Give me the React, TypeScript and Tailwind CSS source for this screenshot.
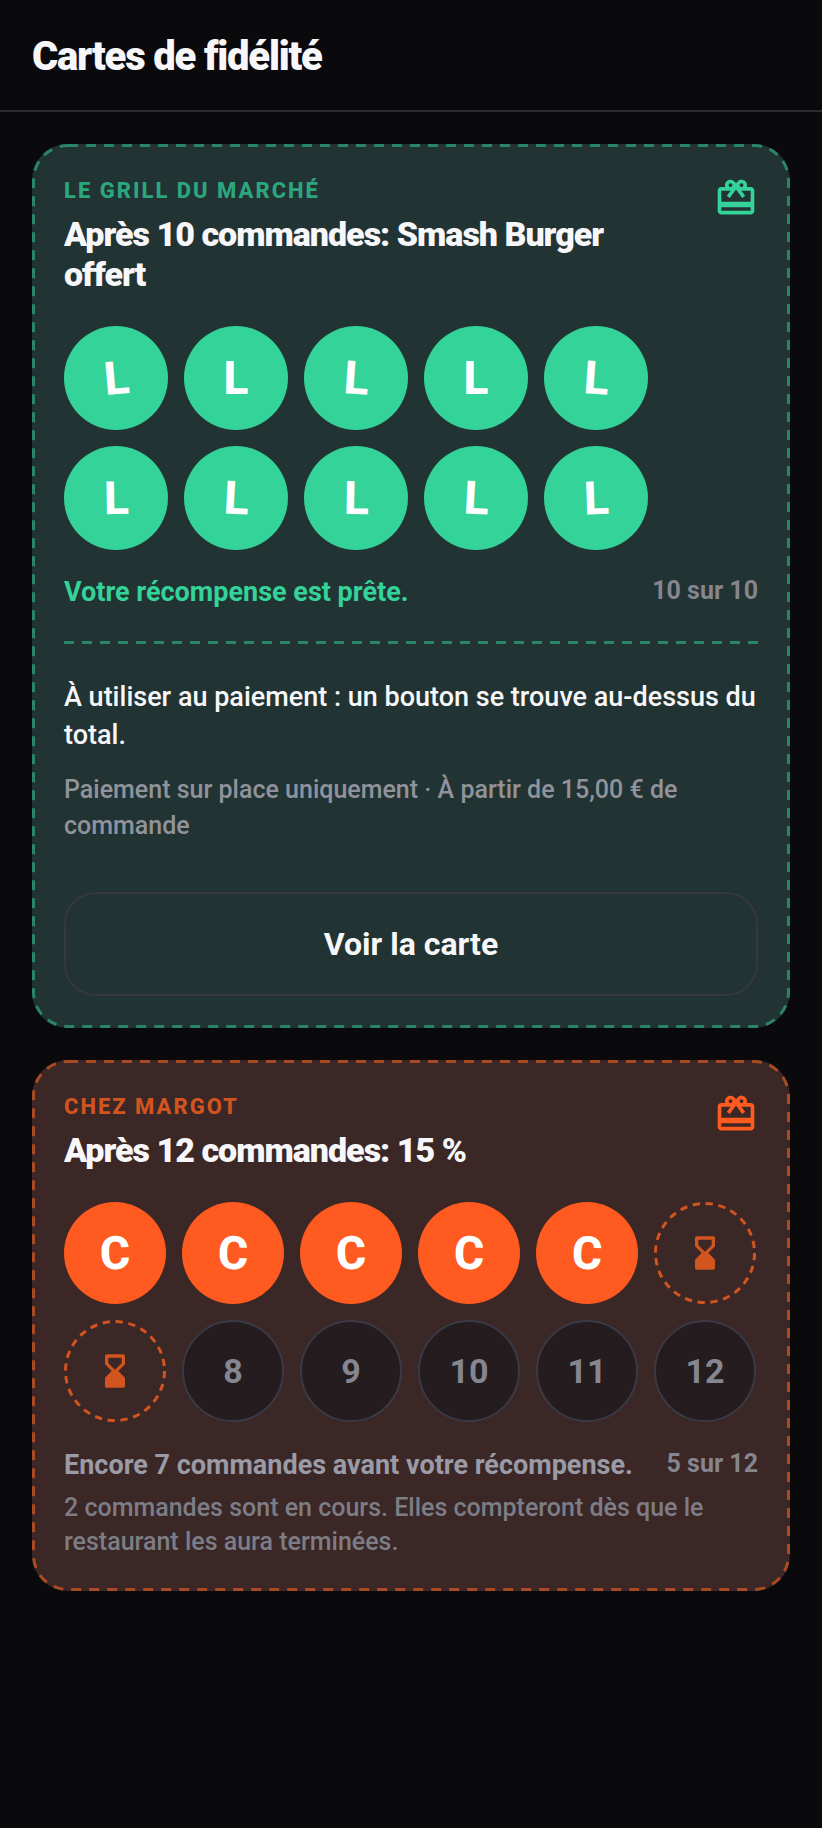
import { MdCardGiftcard } from 'react-icons/md';

const greenTilts = ['-rotate-[5deg]', 'rotate-0', 'rotate-[4deg]', 'rotate-0', 'rotate-[4deg]', '-rotate-[1deg]', 'rotate-[3deg]', 'rotate-[1deg]', 'rotate-[3deg]', '-rotate-[2deg]'];
const orangeTilts = ['-rotate-[2deg]', 'rotate-[1deg]', '-rotate-[2deg]', 'rotate-[1deg]', 'rotate-[3deg]'];

function CardBorder({ color }: { color: string }) {
	return (
		<svg className="absolute inset-0 w-full h-full pointer-events-none" fill="none">
			<rect
				x="1.5"
				y="1.5"
				rx="34.5"
				className="w-[calc(100%-3px)] h-[calc(100%-3px)]"
				stroke={color}
				strokeWidth="3"
				strokeDasharray="10 8"
			/>
		</svg>
	);
}

function Pending() {
	return (
		<div className="relative w-[102px] h-[102px] flex items-center justify-center">
			<svg className="absolute inset-0" width="102" height="102" fill="none">
				<circle cx="51" cy="51" r="49.5" stroke="#d2541f" strokeWidth="3" strokeDasharray="7.3 5.67" />
			</svg>
			<svg width="40" height="40" viewBox="0 0 24 24" fill="#d2541f">
				<path
					fillRule="evenodd"
					d="M7 2h10a1 1 0 0 1 1 1v4.6a1 1 0 0 1-.3.7L14 12l3.7 3.7a1 1 0 0 1 .3.7V21a1 1 0 0 1-1 1H7a1 1 0 0 1-1-1v-4.6a1 1 0 0 1 .3-.7L10 12 6.3 8.3a1 1 0 0 1-.3-.7V3a1 1 0 0 1 1-1zM8.5 4a.5.5 0 0 0-.5.5v2.8l4 4 4-4V4.5a.5.5 0 0 0-.5-.5z"
				/>
			</svg>
		</div>
	);
}

function Empty({ n }: { n: number }) {
	return (
		<div className="w-[102px] h-[102px] rounded-full border-2 border-[#3a3a46] bg-[#241c1f] flex items-center justify-center text-[34px] font-bold text-[#85868f]">
			{n}
		</div>
	);
}

export default function App() {
	return (
		<div className="min-h-[1828px] bg-[#0a0a0c] font-['Roboto',sans-serif] text-[#f7f7fa]">
			<header className="h-[112px] border-b-2 border-[#2a2a31] px-8 pt-1 flex items-center">
				<h1 className="text-[40px] font-black tracking-[-1.2px]">Cartes de fidélité</h1>
			</header>
			<main className="px-8 pt-8 flex flex-col gap-8">
				<section className="relative rounded-[36px] bg-[#223333] px-8 pt-[34px] pb-8">
					<CardBorder color="#2a8468" />
					<MdCardGiftcard size={44} color="#34d399" className="absolute right-8 top-8" />
					<div className="text-[22px] leading-[26px] font-extrabold tracking-[2px] text-[#2ba67e]">LE GRILL DU MARCHÉ</div>
					<h2 className="mt-[10px] w-[560px] text-[34px] leading-[40px] font-black tracking-[-1px]">Après 10 commandes: Smash Burger offert</h2>
					<div className="mt-8 flex flex-wrap gap-4">
						{greenTilts.map((tilt, i) => (
							<div key={i} className="w-[104px] h-[104px] rounded-full bg-[#34d399] flex items-center justify-center">
								<span className={`text-[46px] font-extrabold text-white ${tilt}`}>L</span>
							</div>
						))}
					</div>
					<div className="mt-6 flex items-start justify-between">
						<div className="text-[27px] leading-[36px] font-bold text-[#34d399]">Votre récompense est prête.</div>
						<div className="text-[25px] leading-[34px] font-bold text-[#85868f]">10 sur 10</div>
					</div>
					<div className="mt-[31px] h-[3px] bg-[repeating-linear-gradient(90deg,#2a8468_0_10px,transparent_10px_18px)]" />
					<p className="mt-[34px] text-[27px] leading-[38px] font-medium">À utiliser au paiement : un bouton se trouve au-dessus du total.</p>
					<p className="mt-[18px] text-[25px] leading-[36px] font-medium text-[#90939c]">Paiement sur place uniquement · À partir de 15,00 € de commande</p>
					<button className="mt-12 w-full h-[104px] rounded-[32px] border-2 border-[#37373f] text-[32px] font-bold">Voir la carte</button>
				</section>
				<section className="relative rounded-[36px] bg-[#3a2726] px-8 pt-[34px] pb-8">
					<CardBorder color="#a84a22" />
					<MdCardGiftcard size={44} color="#ff5a1f" className="absolute right-8 top-8" />
					<div className="text-[22px] leading-[26px] font-extrabold tracking-[2px] text-[#d2541f]">CHEZ MARGOT</div>
					<h2 className="mt-[10px] w-[560px] text-[34px] leading-[40px] font-black tracking-[-1px]">Après 12 commandes: 15 %</h2>
					<div className="mt-8 flex flex-wrap gap-4">
						{orangeTilts.map((tilt, i) => (
							<div key={i} className="w-[102px] h-[102px] rounded-full bg-[#ff5a1f] flex items-center justify-center">
								<span className={`text-[46px] font-extrabold text-white ${tilt}`}>C</span>
							</div>
						))}
						<Pending />
						<Pending />
						{[8, 9, 10, 11, 12].map((n) => (
							<Empty key={n} n={n} />
						))}
					</div>
					<div className="mt-[25px] flex items-start justify-between">
						<div className="text-[27px] leading-[36px] font-bold text-[#9a9ba6]">Encore 7 commandes avant votre récompense.</div>
						<div className="text-[25px] leading-[34px] font-bold text-[#85868f]">5 sur 12</div>
					</div>
					<p className="mt-2 text-[25px] leading-[34px] font-medium text-[#7d7d86]">2 commandes sont en cours. Elles compteront dès que le restaurant les aura terminées.</p>
				</section>
			</main>
		</div>
	);
}
